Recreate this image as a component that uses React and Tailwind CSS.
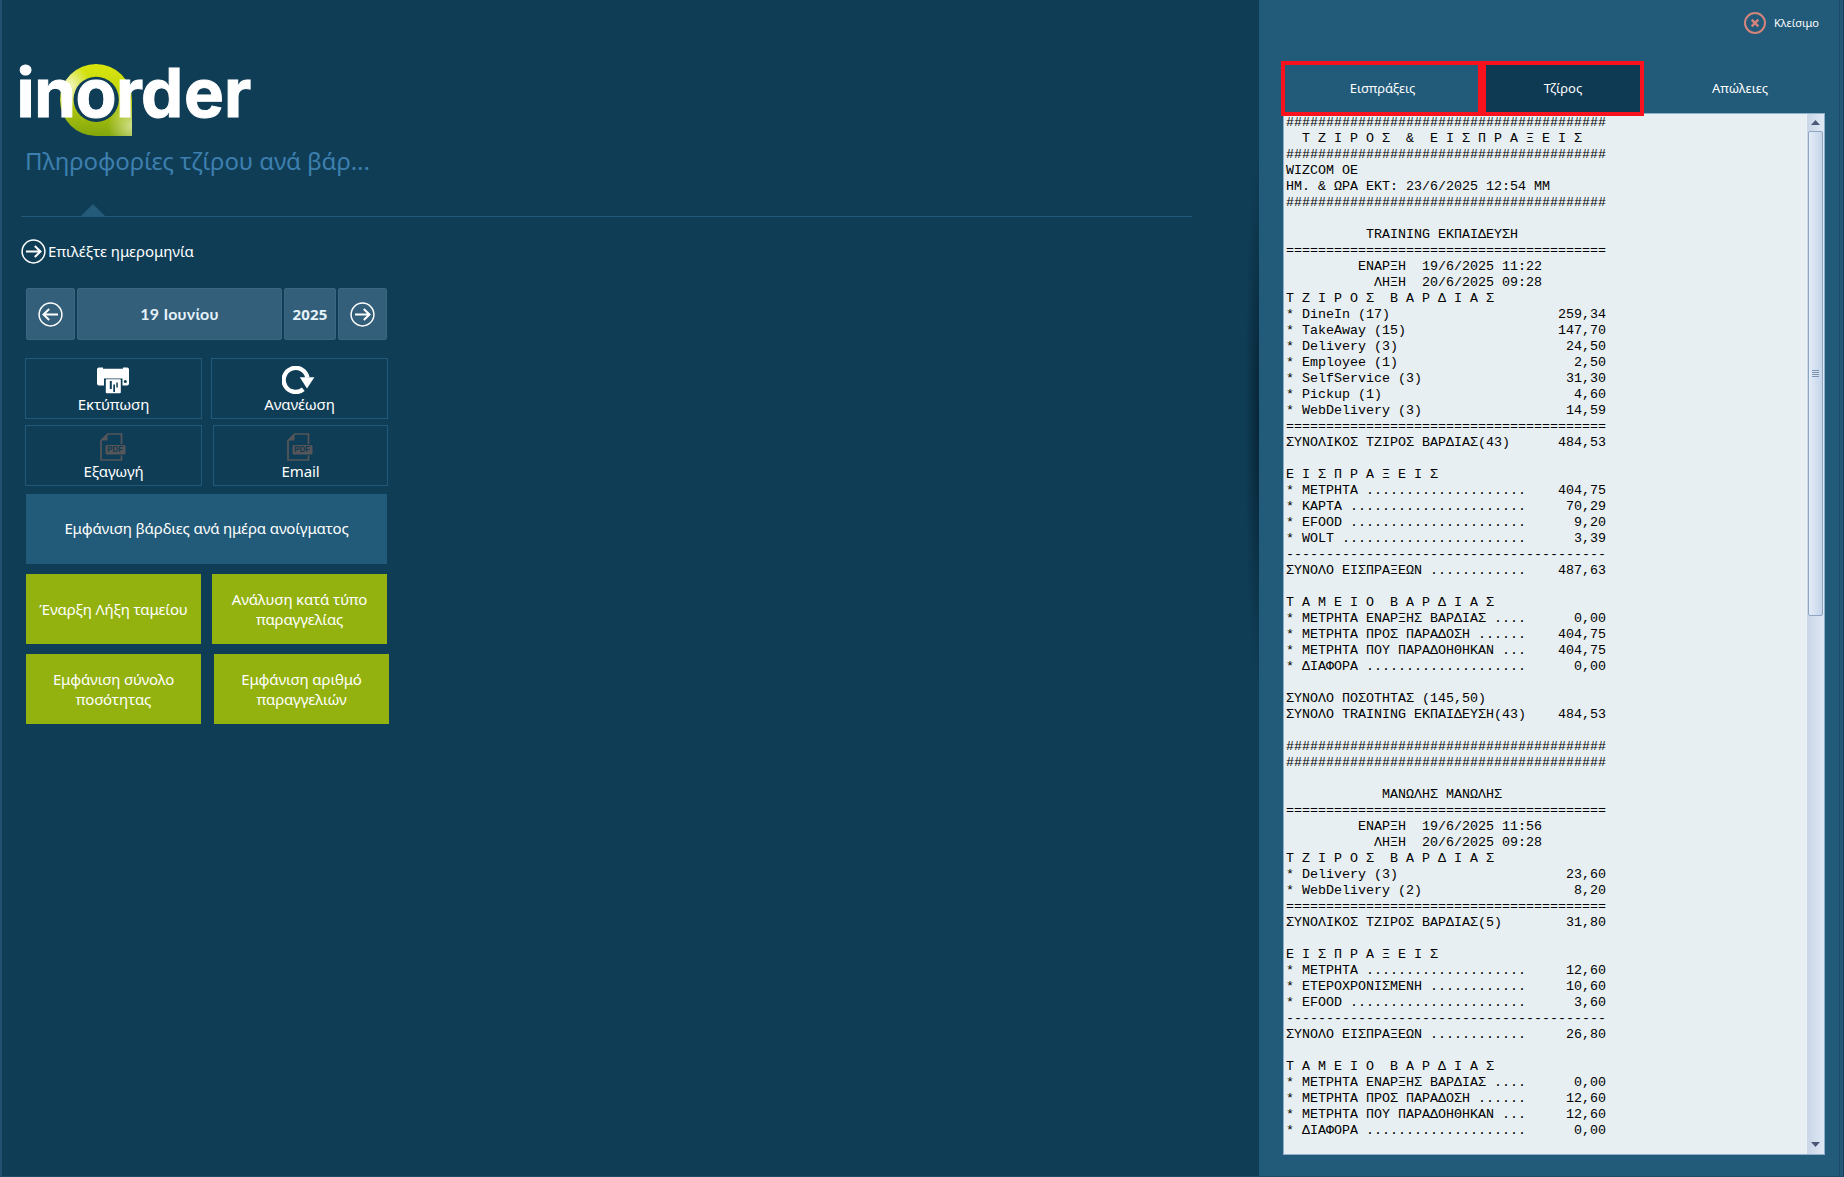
import React from "react";

const HASH = "#".repeat(40);
const EQ = "=".repeat(40);
const DASH = "-".repeat(40);
const row = (label, value) => label.padEnd(40 - value.length, " ") + value;
const dots = (label, value) => row((label + " ").padEnd(30, "."), value);

const REPORT = [
  HASH,
  "  Τ Ζ Ι Ρ Ο Σ  &  Ε Ι Σ Π Ρ Α Ξ Ε Ι Σ",
  HASH,
  "WIZCOM OE",
  "ΗΜ. & ΩΡΑ ΕΚΤ: 23/6/2025 12:54 ΜΜ",
  HASH,
  "",
  "          TRAINING ΕΚΠΑΙΔΕΥΣΗ",
  EQ,
  "         ΕΝΑΡΞΗ  19/6/2025 11:22",
  "           ΛΗΞΗ  20/6/2025 09:28",
  "Τ Ζ Ι Ρ Ο Σ  Β Α Ρ Δ Ι Α Σ",
  row("* DineIn (17)", "259,34"),
  row("* TakeAway (15)", "147,70"),
  row("* Delivery (3)", "24,50"),
  row("* Employee (1)", "2,50"),
  row("* SelfService (3)", "31,30"),
  row("* Pickup (1)", "4,60"),
  row("* WebDelivery (3)", "14,59"),
  EQ,
  row("ΣΥΝΟΛΙΚΟΣ ΤΖΙΡΟΣ ΒΑΡΔΙΑΣ(43)", "484,53"),
  "",
  "Ε Ι Σ Π Ρ Α Ξ Ε Ι Σ",
  dots("* ΜΕΤΡΗΤΑ", "404,75"),
  dots("* ΚΑΡΤΑ", "70,29"),
  dots("* EFOOD", "9,20"),
  dots("* WOLT", "3,39"),
  DASH,
  dots("ΣΥΝΟΛΟ ΕΙΣΠΡΑΞΕΩΝ", "487,63"),
  "",
  "Τ Α Μ Ε Ι Ο  Β Α Ρ Δ Ι Α Σ",
  dots("* ΜΕΤΡΗΤΑ ΕΝΑΡΞΗΣ ΒΑΡΔΙΑΣ", "0,00"),
  dots("* ΜΕΤΡΗΤΑ ΠΡΟΣ ΠΑΡΑΔΟΣΗ", "404,75"),
  dots("* ΜΕΤΡΗΤΑ ΠΟΥ ΠΑΡΑΔΟΗΘΗΚΑΝ", "404,75"),
  dots("* ΔΙΑΦΟΡΑ", "0,00"),
  "",
  "ΣΥΝΟΛΟ ΠΟΣΟΤΗΤΑΣ (145,50)",
  row("ΣΥΝΟΛΟ TRAINING ΕΚΠΑΙΔΕΥΣΗ(43)", "484,53"),
  "",
  HASH,
  HASH,
  "",
  "            ΜΑΝΩΛΗΣ ΜΑΝΩΛΗΣ",
  EQ,
  "         ΕΝΑΡΞΗ  19/6/2025 11:56",
  "           ΛΗΞΗ  20/6/2025 09:28",
  "Τ Ζ Ι Ρ Ο Σ  Β Α Ρ Δ Ι Α Σ",
  row("* Delivery (3)", "23,60"),
  row("* WebDelivery (2)", "8,20"),
  EQ,
  row("ΣΥΝΟΛΙΚΟΣ ΤΖΙΡΟΣ ΒΑΡΔΙΑΣ(5)", "31,80"),
  "",
  "Ε Ι Σ Π Ρ Α Ξ Ε Ι Σ",
  dots("* ΜΕΤΡΗΤΑ", "12,60"),
  dots("* ΕΤΕΡΟΧΡΟΝΙΣΜΕΝΗ", "10,60"),
  dots("* EFOOD", "3,60"),
  DASH,
  dots("ΣΥΝΟΛΟ ΕΙΣΠΡΑΞΕΩΝ", "26,80"),
  "",
  "Τ Α Μ Ε Ι Ο  Β Α Ρ Δ Ι Α Σ",
  dots("* ΜΕΤΡΗΤΑ ΕΝΑΡΞΗΣ ΒΑΡΔΙΑΣ", "0,00"),
  dots("* ΜΕΤΡΗΤΑ ΠΡΟΣ ΠΑΡΑΔΟΣΗ", "12,60"),
  dots("* ΜΕΤΡΗΤΑ ΠΟΥ ΠΑΡΑΔΟΗΘΗΚΑΝ", "12,60"),
  dots("* ΔΙΑΦΟΡΑ", "0,00"),
];

function Logo() {
  return (
    <svg width="240" height="80" viewBox="16 60 240 80" className="block overflow-visible">
      <defs>
        <linearGradient id="pin" x1="0" y1="0" x2="0" y2="1">
          <stop offset="0" stopColor="#d9e60c" />
          <stop offset="0.45" stopColor="#c0d210" />
          <stop offset="1" stopColor="#82a60c" />
        </linearGradient>
        <radialGradient id="shineTop" cx="0.12" cy="0.3" r="0.3">
          <stop offset="0" stopColor="#fbfde0" stopOpacity="0.9" />
          <stop offset="1" stopColor="#fbfde0" stopOpacity="0" />
        </radialGradient>
        <radialGradient id="shineBottom" cx="1" cy="0.86" r="0.34">
          <stop offset="0" stopColor="#e6efb4" stopOpacity="0.75" />
          <stop offset="1" stopColor="#e6efb4" stopOpacity="0" />
        </radialGradient>
      </defs>
      <path d="M96 64a36 36 0 0 1 36 36v36H96a36 36 0 0 1 0-72z" fill="url(#pin)" />
      <path d="M96 64a36 36 0 0 1 36 36v36H96a36 36 0 0 1 0-72z" fill="url(#shineTop)" />
      <path d="M96 64a36 36 0 0 1 36 36v36H96a36 36 0 0 1 0-72z" fill="url(#shineBottom)" />
      <g fill="#fff" stroke="#fff" strokeWidth="1" fontFamily="Inter, sans-serif" fontWeight="700" fontSize="67">
        <text x="16.6 34.2" y="116.700">in</text>
        <text x="116 141 184 224" y="116.700">rder</text>
        <circle cx="96.2" cy="99.3" r="22.6" fill="#0f3d56" stroke="none" />
        <text x="75.500" y="117">o</text>
      </g>
    </svg>
  );
}

function ArrowCircle({ left = false }) {
  return (
    <svg width="25" height="25" viewBox="0 0 25 25" fill="none" stroke="#fff" className="shrink-0">
      <circle cx="12.5" cy="12.5" r="11.4" strokeWidth="1.5" />
      <g transform={left ? "matrix(-1 0 0 1 25 0)" : undefined}>
        <path d="M5 12.5h14.5M13.8 7l5.7 5.5-5.7 5.5" strokeWidth="2" />
      </g>
    </svg>
  );
}

function Printer() {
  return (
    <svg width="32" height="27" viewBox="0 0 32 27" className="mr-[2px]">
      <path d="M2 0.5h4v1.2h20V0.5h4a2 2 0 0 1 2 2v14a2 2 0 0 1-2 2h-4.5V11.5H7v7H2a2 2 0 0 1-2-2v-14a2 2 0 0 1 2-2z" fill="#fff" />
      <circle cx="28.3" cy="14.5" r="1.5" fill="#0f3d56" />
      <rect x="8.8" y="12.2" width="15" height="14" rx="1" fill="#fff" />
      <path d="M12.8 14h2v8h-2zM16.3 17.5h1.7v7.5h-1.7zM19.3 15.5h1.5v5h-1.5z" fill="#0f3d56" />
    </svg>
  );
}

function Refresh() {
  return (
    <svg width="33" height="28" viewBox="0 0 33 28" className="mr-[2px]">
      <path d="M21.3 23.2A12 12 0 1 1 25.4 11.5" fill="none" stroke="#fff" strokeWidth="4.4" />
      <path d="M17.8 11.2H32.4L25 22.4z" fill="#fff" />
    </svg>
  );
}

function Pdf() {
  return (
    <svg width="26" height="28" viewBox="0 0 26 28" className="mr-[2px]">
      <path d="M21.5 11V1H7.5L1 7.500V27h20.500v-4.500" fill="none" stroke="#56565a" strokeWidth="1.700" />
      <path d="M1.500 7.500h6v-6z" fill="#56565a" />
      <rect x="5.500" y="12" width="20" height="9.500" rx="1.500" fill="#56565a" />
      <text x="7.300" y="19.300" textLength="15.500" lengthAdjust="spacingAndGlyphs" fontFamily="Inter, sans-serif" fontWeight="700" fontSize="7.200" fill="#123a50">
        PDF
      </text>
    </svg>
  );
}

function Tile({ icon, label, className }) {
  return (
    <div className={"flex h-[61px] flex-col items-center justify-end border border-[#20597a] pb-1 leading-5 " + className}>
      <div className="flex h-7 items-center">{icon}</div>
      <span className="whitespace-nowrap">{label}</span>
    </div>
  );
}

function Green({ children, className = "" }) {
  return (
    <div className={"flex h-[70px] w-[175px] items-center justify-center bg-[#93b20f] text-center leading-5 " + className}>
      <span>{children}</span>
    </div>
  );
}

const cell = "flex h-[52px] items-center justify-center rounded-[2px] border border-[#3a6680] bg-[#335f7a]";

export default function App() {
  return (
    <div className="flex h-[1177px] w-[1844px] overflow-hidden border-b border-[#1d4c69] bg-[#0f3d56] font-['Noto_Sans',sans-serif] text-[15px] tracking-[-0.14px] text-white">
      <main className="relative flex w-[1259px] flex-col border-l-2 border-[#225070] pl-[19px] pt-[60px]">
        <div className="-ml-[5px]">
          <Logo />
        </div>
        <h1 className="ml-[4px] mt-[5px] text-[24px] leading-[32px] tracking-[-0.1px] text-[#3d7fae]">Πληροφορίες τζίρου ανά βάρ...</h1>
        <div className="mt-[27px] w-[1171px] border-b border-[#23597a]">
          <svg width="24" height="12" viewBox="0 0 24 12" className="ml-[60px] block">
            <path d="M0 12 12 0 24 12z" fill="#235b78" />
          </svg>
        </div>
        <div className="mt-[22px] flex h-[25px] items-center gap-[2px]">
          <ArrowCircle />
          <span className="tracking-[-0.05px]">Επιλέξτε ημερομηνία</span>
        </div>

        <div className="ml-[5px] mt-[24px] flex gap-[2px]">
          <div className={cell + " w-[49px]"}><ArrowCircle left /></div>
          <div className={cell + " w-[205px] font-['Lato',sans-serif] text-[16px] font-bold tracking-[0.25px] text-[#e4f1f8]"}>19 Ιουνίου</div>
          <div className={cell + " w-[52px] font-bold tracking-[0.2px] text-[#e4f1f8]"}>2025</div>
          <div className={cell + " w-[49px]"}><ArrowCircle /></div>
        </div>

        <div className="ml-[4px] mt-[18px] flex w-[363px] justify-between">
          <Tile className="w-[177px]" icon={<Printer />} label="Εκτύπωση" />
          <Tile className="w-[177px]" icon={<Refresh />} label="Ανανέωση" />
        </div>
        <div className="ml-[4px] mt-[6px] flex w-[363px] justify-between">
          <Tile className="w-[177px]" icon={<Pdf />} label="Εξαγωγή" />
          <Tile className="w-[175px]" icon={<Pdf />} label="Email" />
        </div>

        <div className="ml-[5px] mt-[8px] flex h-[70px] w-[361px] items-center justify-center bg-[#225b79] pb-px">
          Εμφάνιση βάρδιες ανά ημέρα ανοίγματος
        </div>
        <div className="ml-[5px] mt-[10px] flex gap-[11px]">
          <Green>Έναρξη Λήξη ταμείου</Green>
          <Green>Ανάλυση κατά τύπο<br />παραγγελίας</Green>
        </div>
        <div className="ml-[5px] mt-[10px] flex gap-[13px]">
          <Green>Εμφάνιση σύνολο<br />ποσότητας</Green>
          <Green>Εμφάνιση αριθμό<br />παραγγελιών</Green>
        </div>
        <div className="absolute right-0 top-[150px] h-[540px] w-[14px] bg-[radial-gradient(ellipse_at_right,rgba(3,20,32,0.6),transparent_70%)]" />
      </main>

      <aside className="flex w-[581px] flex-col border-r border-[#1b4b68] bg-[#225a79]">
        <div className="flex h-[61px] items-start justify-end pr-[20px] pt-[12px] text-[11px] tracking-normal">
          <div className="flex h-[22px] items-center gap-[8px]">
            <svg width="22" height="22" viewBox="0 0 22 22" fill="none" stroke="#d3857c">
              <circle cx="11" cy="11" r="10" strokeWidth="2" />
              <path d="M7.700 7.700l6.600 6.600M14.300 7.700l-6.600 6.600" strokeWidth="2.400" />
            </svg>
            <span>Κλείσιμο</span>
          </div>
        </div>
        <div className="relative z-10 ml-[22px] flex h-[55px] text-[13px] tracking-normal">
          <div className="flex w-[201px] items-center justify-center border-4 border-[#f8121d] pl-[2px] tracking-[-0.1px]">Εισπράξεις</div>
          <div className="flex w-[162px] items-center justify-center border-4 border-[#f8121d] bg-[#0f3a54]">Τζίρος</div>
          <div className="flex w-[192px] items-center justify-center">Απώλειες</div>
        </div>
        <div className="-mt-[3px] ml-[24px] flex h-[1042px] w-[542px] border border-[#8fb0cd] bg-[#e7eff2]">
          <pre className="grow pl-[2px] pt-px font-['Liberation_Mono',monospace] text-[13.333px] leading-[16px] tracking-normal text-black">{REPORT.join("\n")}</pre>
          <div className="flex w-[18px] flex-col items-center border-l border-[#eef3f8] bg-linear-to-r from-[#c9d6e8] to-[#dfe8f5]">
            <div className="flex h-[17px] items-center">
              <svg width="9" height="5" viewBox="0 0 9 5"><path d="M0 5 4.500 0 9 5z" fill="#4c5878" /></svg>
            </div>
            <div className="flex h-[485px] w-[15px] items-center justify-center rounded-[2px] border border-[#8ea5c4] bg-linear-to-r from-[#e3ecf8] to-[#c6d5ea]">
              <div className="flex w-[7px] flex-col gap-px">
                <div className="h-px bg-[#7f94b3]" />
                <div className="h-px bg-[#7f94b3]" />
                <div className="h-px bg-[#7f94b3]" />
                <div className="h-px bg-[#7f94b3]" />
              </div>
            </div>
            <div className="mt-auto flex h-[19px] items-center">
              <svg width="9" height="5" viewBox="0 0 9 5"><path d="M0 0 4.500 5 9 0z" fill="#4c5878" /></svg>
            </div>
          </div>
        </div>
      </aside>
      <div className="grow border-r border-[#153f5a] bg-[#235877]" />
    </div>
  );
}
